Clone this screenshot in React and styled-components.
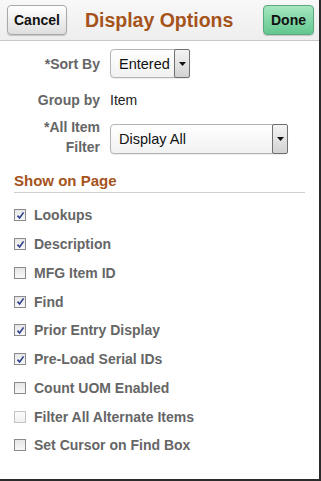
import React from 'react'
import styled, { createGlobalStyle } from 'styled-components'

const Global = createGlobalStyle`
    body{
        margin:0;
        background:#fff;
        font-family:"Liberation Sans", Arial, sans-serif;
    }
`

const options = [
    { label: 'Lookups', checked: true },
    { label: 'Description', checked: true },
    { label: 'MFG Item ID', checked: false },
    { label: 'Find', checked: true },
    { label: 'Prior Entry Display', checked: true },
    { label: 'Pre-Load Serial IDs', checked: true },
    { label: 'Count UOM Enabled', checked: false },
    { label: 'Filter All Alternate Items', checked: false, disabled: true },
    { label: 'Set Cursor on Find Box', checked: false },
]

const Select = ({ value, width, height }) => {
    return(
        <SelectBox width={width} height={height}>
            <SelectValue>{value}</SelectValue>
            <SelectArrow>
                <svg width="7" height="4" viewBox="0 0 7 4"><path d="M0 0h7L3.5 4z" fill="#111" /></svg>
            </SelectArrow>
        </SelectBox>
    )
}

const CheckBox = ({ checked, disabled }) => {
    return(
        <Box disabled={disabled}>
            {checked &&
                <svg width="9" height="9" viewBox="0 0 9 9">
                    <path d="M1.5 4.6 L3.6 7 L7.6 1.4" fill="none" stroke="#2d3f8f" strokeWidth="1.6" />
                </svg>
            }
        </Box>
    )
}

const App = () => {
  return (
    <Frame>
        <Global />
        <Header>
            <Button>Cancel</Button>
            <Title>Display Options</Title>
            <Button primary>Done</Button>
        </Header>

        <Form>
            <Field top="8px">
                <Label>*Sort By</Label>
                <Select value="Entered" width="80px" height="29px" />
            </Field>
            <Field top="12px">
                <Label>Group by</Label>
                <Value>Item</Value>
            </Field>
            <Field top="7px" align="flex-start">
                <Label>*All Item<br />Filter</Label>
                <SelectSlot>
                    <Select value="Display All" width="178px" height="30px" />
                </SelectSlot>
            </Field>
        </Form>

        <Section>
            <SectionTitle>Show on Page</SectionTitle>
            <List>
                {options.map(o => (
                    <Row key={o.label}>
                        <CheckBox checked={o.checked} disabled={o.disabled} />
                        <RowLabel>{o.label}</RowLabel>
                    </Row>
                ))}
            </List>
        </Section>
    </Frame>
  )
}

export default App

const Frame = styled.div`
    width:321px;
    height:481px;
    box-sizing:border-box;
    border-right:2px solid #2a2a2a;
    border-bottom:2px solid #2a2a2a;
    background:#fff;
    overflow:hidden;
`
const Header = styled.div`
    height:40px;
    display:flex;
    align-items:center;
    justify-content:space-between;
    padding:0 5px 0 7px;
    background:linear-gradient(#f8f8f8, #eeeeee);
    border-bottom:1px solid #c6c6c6;
`
const Button = styled.button`
    height:30px;
    padding:0 ${p => p.primary ? '7px' : '6px'};
    font-family:"Liberation Sans", Arial, sans-serif;
    font-size:14px;
    font-weight:bold;
    color:#111;
    border-radius:4px;
    border:1px solid ${p => p.primary ? '#5aa87b' : '#a8a8a8'};
    background:${p => p.primary
        ? 'linear-gradient(#a6e6c1, #62c78e)'
        : 'linear-gradient(#ffffff, #dedede)'};
    box-shadow:0 1px 1px rgba(0,0,0,0.18);
`
const Title = styled.h1`
    flex:1;
    margin:0 0 0 18px;
    font-size:19.5px;
    font-weight:bold;
    color:#a5531b;
`
const Form = styled.div`
    display:flex;
    flex-direction:column;
    margin-bottom:15px;
`
const Field = styled.div`
    display:flex;
    align-items:${p => p.align || 'center'};
    gap:10px;
    margin-top:${p => p.top};
`
const Label = styled.div`
    width:100px;
    flex-shrink:0;
    text-align:right;
    font-size:14px;
    font-weight:bold;
    color:#666;
    line-height:20px;
`
const Value = styled.div`
    font-size:14px;
    color:#222;
    line-height:20px;
`
const SelectSlot = styled.div`
    padding-top:7px;
`
const SelectBox = styled.div`
    width:${p => p.width};
    height:${p => p.height};
    box-sizing:border-box;
    display:flex;
    border:1px solid #b4b4b4;
    border-radius:4px;
    background:linear-gradient(#ffffff, #f1f1f1);
    box-shadow:0 1px 1px rgba(0,0,0,0.08);
`
const SelectValue = styled.div`
    flex:1;
    display:flex;
    align-items:center;
    padding-left:8px;
    font-size:14.5px;
    color:#111;
    white-space:nowrap;
`
const SelectArrow = styled.div`
    width:14px;
    margin:-1px -1px -1px 0;
    display:flex;
    align-items:center;
    justify-content:center;
    border:1px solid #6f6f6f;
    border-radius:2px;
    background:linear-gradient(#f4f4f4, #d2d2d2);
`
const Section = styled.div`
    margin:0 14px 0 14px;
`
const SectionTitle = styled.h2`
    margin:0;
    padding-bottom:3px;
    font-size:15px;
    font-weight:bold;
    color:#a5531b;
    border-bottom:1px solid #cfcfcf;
`
const List = styled.div`
    padding-top:8px;
`
const Row = styled.div`
    height:28.75px;
    display:flex;
    align-items:center;
    gap:8px;
`
const Box = styled.span`
    width:12px;
    height:12px;
    box-sizing:border-box;
    display:flex;
    align-items:center;
    justify-content:center;
    border:1px solid ${p => p.disabled ? '#c4c4c4' : '#8a8a8a'};
    background:${p => p.disabled
        ? 'linear-gradient(#fbfbfb, #f1f1f1)'
        : 'linear-gradient(#e6e6e6, #f8f8f8)'};
`
const RowLabel = styled.span`
    font-size:14px;
    font-weight:bold;
    color:#666;
`
